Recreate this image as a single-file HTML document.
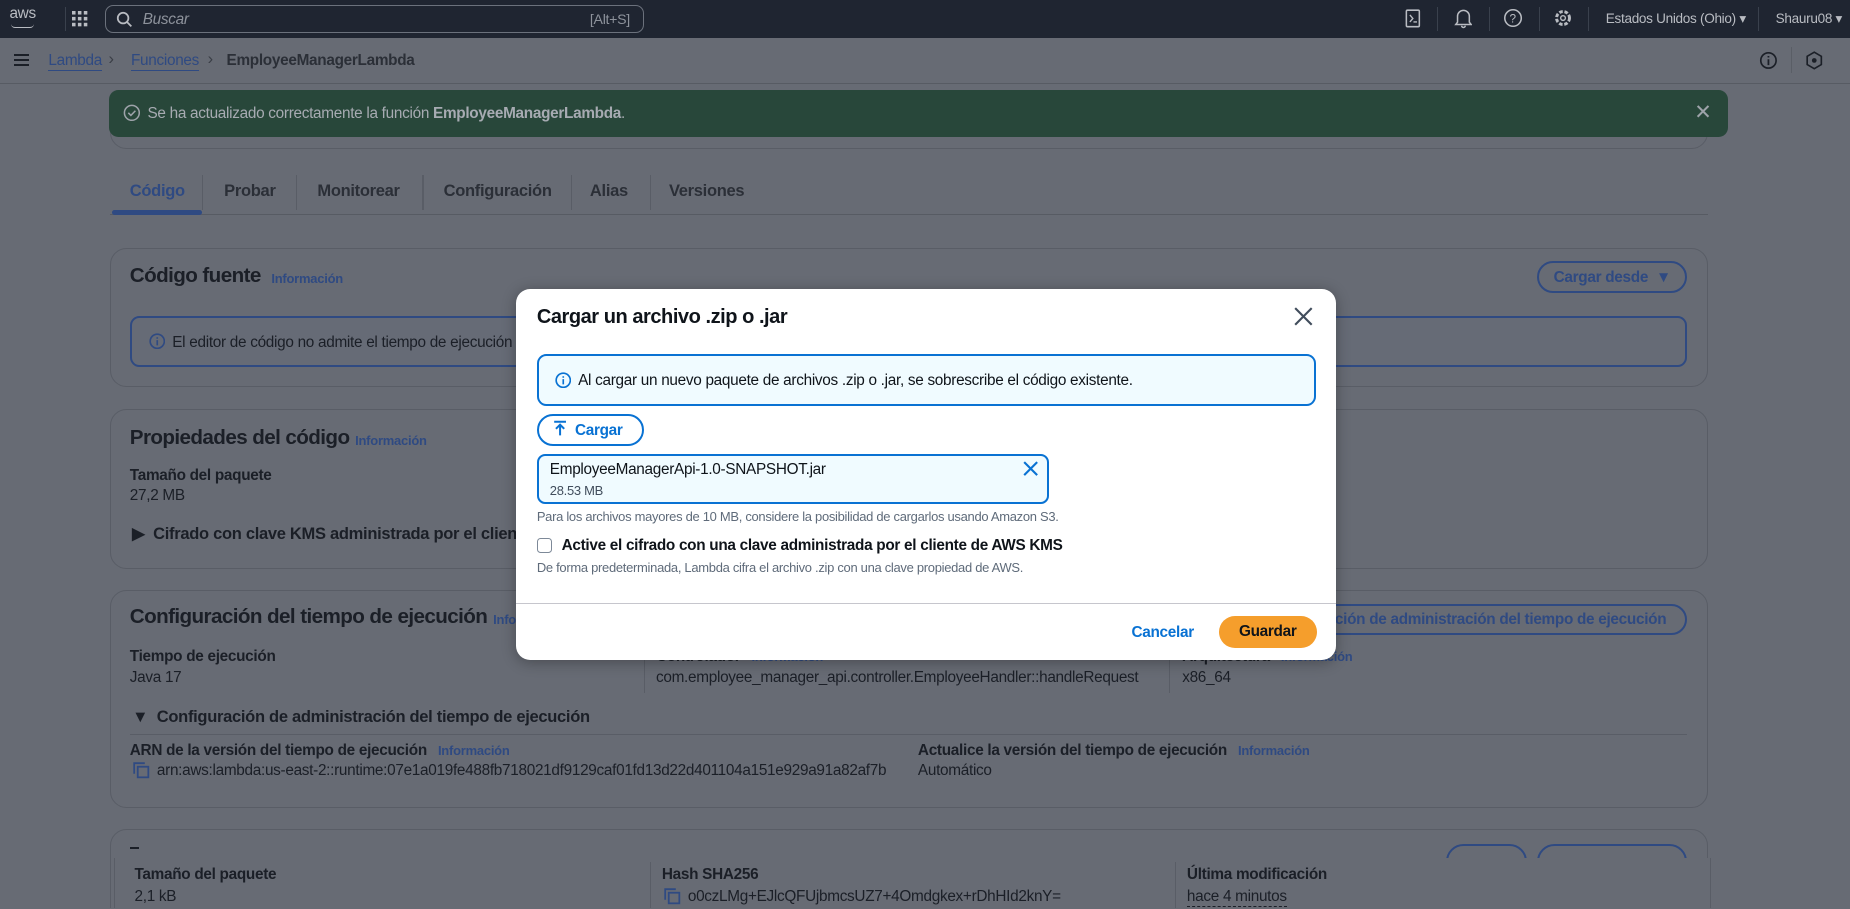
<!DOCTYPE html>
<html><head><meta charset="utf-8"><style>
*{box-sizing:border-box;margin:0;padding:0}
html,body{width:1850px;height:909px;overflow:hidden;background:#676b74}
#z{zoom:1.17985;width:1568px;height:770px;position:relative;font-family:"Liberation Sans",sans-serif;color:#1b1f27;font-size:13px;letter-spacing:-0.25px;background:#676b74;overflow:hidden}
.a{position:absolute;white-space:nowrap}
.top{left:0;top:0;width:1568px;height:32px;background:#1f2531}
.crumb{left:0;top:32px;width:1568px;height:39px;border-bottom:1px solid #575b63}
.card{position:absolute;border:1px solid #595d66;border-radius:14px}
.h2{font-size:17.5px;font-weight:bold;letter-spacing:-0.5px}
.info{font-size:11px;font-weight:bold;color:#2f4a82;letter-spacing:-0.2px}
.lbl{font-weight:bold;font-size:13px}
.lnk{color:#2f4a82}
.btn{position:absolute;border:2px solid #2f4a82;border-radius:16px;color:#2f4a82;font-weight:bold;font-size:13px;text-align:center}
.modal{left:437px;top:245px;width:695px;height:314px;background:#fff;border-radius:12px;box-shadow:0 2px 12px rgba(0,0,0,.3)}
.m{color:#0f141a}
.blue{color:#0972d3}
</style></head><body><div id="z">
<div class="a top"></div>
<div class="a" style="left:8px;top:4px;color:#b9bcc2;font-size:13px;">aws</div>
<div class="a" style="left:9px;top:20px;width:20px;height:4px;border-bottom:1.5px solid #b9bcc2;border-radius:0 0 10px 10px"></div>
<div class="a" style="left:55px;top:6px;width:1px;height:20px;background:#3a414d"></div>
<svg class="a" style="left:61px;top:9px" width="14" height="14"><g fill="#b9bcc2"><rect x="0" y="0" width="3" height="3"/><rect x="5" y="0" width="3" height="3"/><rect x="10" y="0" width="3" height="3"/><rect x="0" y="5" width="3" height="3"/><rect x="5" y="5" width="3" height="3"/><rect x="10" y="5" width="3" height="3"/><rect x="0" y="10" width="3" height="3"/><rect x="5" y="10" width="3" height="3"/><rect x="10" y="10" width="3" height="3"/></g></svg>
<div class="a" style="left:89px;top:4px;width:457px;height:24px;border:1px solid #6b717c;border-radius:7px"></div>
<svg class="a" style="left:98px;top:9px" width="14" height="14"><circle cx="6" cy="6" r="4.5" stroke="#b9bcc2" stroke-width="1.5" fill="none"/><path d="M9.5 9.5L13 13" stroke="#b9bcc2" stroke-width="1.5"/></svg>
<div class="a" style="left:121px;top:9px;color:#8d929b;font-style:italic;font-size:13px">Buscar</div>
<div class="a" style="left:500px;top:9px;color:#8d929b;font-size:12px">[Alt+S]</div>
<svg class="a" style="left:1190px;top:8px" width="16" height="16"><rect x="2" y="1" width="11" height="14" rx="1" stroke="#b9bcc2" fill="none" stroke-width="1.3"/><path d="M5 5l2.5 3L5 11M8 11h3" stroke="#b9bcc2" fill="none" stroke-width="1.2"/></svg>
<div class="a" style="left:1218px;top:6px;width:1px;height:20px;background:#3a414d"></div>
<svg class="a" style="left:1232px;top:7px" width="16" height="18"><path d="M3 12V7a5 5 0 0110 0v5l1.5 2h-13zM6.5 15a1.5 1.5 0 003 0" stroke="#b9bcc2" fill="none" stroke-width="1.3"/></svg>
<div class="a" style="left:1262px;top:6px;width:1px;height:20px;background:#3a414d"></div>
<svg class="a" style="left:1274px;top:7px" width="17" height="17"><circle cx="8.5" cy="8.5" r="7" stroke="#b9bcc2" fill="none" stroke-width="1.3"/><text x="5.5" y="12.5" font-size="10" fill="#b9bcc2" font-family="Liberation Sans">?</text></svg>
<div class="a" style="left:1304px;top:6px;width:1px;height:20px;background:#3a414d"></div>
<svg class="a" style="left:1316px;top:7px" width="17" height="17"><circle cx="8.5" cy="8.5" r="5.5" stroke="#b9bcc2" fill="none" stroke-width="2.5" stroke-dasharray="3 1.5"/><circle cx="8.5" cy="8.5" r="2" stroke="#b9bcc2" fill="none" stroke-width="1.2"/></svg>
<div class="a" style="left:1346px;top:6px;width:1px;height:20px;background:#3a414d"></div>
<div class="a" style="left:1361px;top:9px;color:#b9bcc2;font-size:11.5px">Estados Unidos (Ohio) ▾</div>
<div class="a" style="left:1490px;top:6px;width:1px;height:20px;background:#3a414d"></div>
<div class="a" style="left:1505px;top:9px;color:#b9bcc2;font-size:11.5px">Shauru08 ▾</div>

<div class="a crumb"></div>
<div class="a" style="left:12px;top:46px;width:13px;height:10px;border-top:2px solid #1b1f27;border-bottom:2px solid #1b1f27"></div>
<div class="a" style="left:12px;top:50px;width:13px;height:2px;background:#1b1f27"></div>
<div class="a lnk" style="left:41px;top:44px;border-bottom:1px solid #2f4a82">Lambda</div>
<div class="a" style="left:92px;top:42px;color:#3a3e46;font-size:14px">›</div>
<div class="a lnk" style="left:111px;top:44px;border-bottom:1px solid #2f4a82">Funciones</div>
<div class="a" style="left:176px;top:42px;color:#3a3e46;font-size:14px">›</div>
<div class="a" style="left:192px;top:44px;font-weight:bold;color:#2b2f37">EmployeeManagerLambda</div>
<svg class="a" style="left:1491px;top:43px" width="16" height="16"><circle cx="8" cy="8" r="6.5" stroke="#1b1f27" fill="none" stroke-width="1.4"/><path d="M8 7v5M8 4.2v1.3" stroke="#1b1f27" stroke-width="1.5"/></svg>
<div class="a" style="left:1518px;top:40px;width:1px;height:22px;background:#5a5e66"></div>
<svg class="a" style="left:1531px;top:43px" width="14" height="16"><path d="M7 1l6 3.5v7L7 15l-6-3.5v-7z" stroke="#1b1f27" fill="none" stroke-width="1.4"/><circle cx="7" cy="8" r="2" fill="#1b1f27"/></svg>

<div class="card" style="left:93px;top:80px;width:1355px;height:46px"></div>
<div class="a" style="left:92px;top:76px;width:1373px;height:40px;background:#28473a;border-radius:8px"></div>
<svg class="a" style="left:104px;top:88px" width="15" height="15"><circle cx="7.5" cy="7.5" r="6.3" stroke="#9ea3aa" fill="none" stroke-width="1.3"/><path d="M4.5 7.5l2.2 2.2 3.8-4" stroke="#9ea3aa" fill="none" stroke-width="1.3"/></svg>
<div class="a" style="left:125px;top:89px;color:#a7abb2">Se ha actualizado correctamente la función <b>EmployeeManagerLambda</b>.</div>
<div class="a" style="left:1436px;top:85px;color:#9ea3aa;font-size:18px">✕</div>

<div class="a" style="left:93px;top:181px;width:1355px;height:1px;background:#575b63"></div>
<div class="a" style="left:95px;top:178px;width:76px;height:4px;background:#2f4a82;border-radius:2px"></div>
<div class="a" style="left:110px;top:154px;font-size:14px;font-weight:bold;color:#2f4a82">Código</div>
<div class="a" style="left:190px;top:154px;font-size:14px;font-weight:bold;color:#2b2f37">Probar</div>
<div class="a" style="left:269px;top:154px;font-size:14px;font-weight:bold;color:#2b2f37">Monitorear</div>
<div class="a" style="left:376px;top:154px;font-size:14px;font-weight:bold;color:#2b2f37">Configuración</div>
<div class="a" style="left:500px;top:154px;font-size:14px;font-weight:bold;color:#2b2f37">Alias</div>
<div class="a" style="left:567px;top:154px;font-size:14px;font-weight:bold;color:#2b2f37">Versiones</div>
<div class="a" style="left:171px;top:148px;width:1px;height:30px;background:#595d66"></div>
<div class="a" style="left:251px;top:148px;width:1px;height:30px;background:#595d66"></div>
<div class="a" style="left:358px;top:148px;width:1px;height:30px;background:#595d66"></div>
<div class="a" style="left:484px;top:148px;width:1px;height:30px;background:#595d66"></div>
<div class="a" style="left:551px;top:148px;width:1px;height:30px;background:#595d66"></div>

<div class="card" style="left:93px;top:210px;width:1355px;height:118px"></div>
<div class="a h2" style="left:110px;top:224px">Código fuente</div>
<div class="a info" style="left:230px;top:230px">Información</div>
<div class="btn" style="left:1303px;top:221px;width:127px;height:27px;padding-top:5px">Cargar desde &nbsp;▼</div>
<div class="a" style="left:110px;top:268px;width:1320px;height:43px;border:2px solid #2f4a82;border-radius:8px;background:#666b76"></div>
<svg class="a" style="left:126px;top:282px" width="14" height="14"><circle cx="7" cy="7" r="6" stroke="#2f4a82" fill="none" stroke-width="1.4"/><path d="M7 6v4.5M7 3.6v1.3" stroke="#2f4a82" stroke-width="1.4"/></svg>
<div class="a" style="left:146px;top:283px">El editor de código no admite el tiempo de ejecución Java 17.</div>

<div class="card" style="left:93px;top:347px;width:1355px;height:135px"></div>
<div class="a h2" style="left:110px;top:361px">Propiedades del código</div>
<div class="a info" style="left:301px;top:367px">Información</div>
<div class="a lbl" style="left:110px;top:396px">Tamaño del paquete</div>
<div class="a" style="left:110px;top:413px">27,2 MB</div>
<div class="a" style="left:112px;top:444px;font-size:14px;font-weight:bold">▶ &nbsp;Cifrado con clave KMS administrada por el cliente</div>

<div class="card" style="left:93px;top:500px;width:1355px;height:185px"></div>
<div class="a h2" style="left:110px;top:513px">Configuración del tiempo de ejecución</div>
<div class="a info" style="left:418px;top:519px">Información</div>
<div class="btn" style="left:1000px;top:512px;width:430px;height:26px;padding-top:4px;text-align:right;padding-right:16px">Editar configuración de administración del tiempo de ejecución</div>
<div class="a lbl" style="left:110px;top:549px">Tiempo de ejecución</div>
<div class="a" style="left:110px;top:567px">Java 17</div>
<div class="a" style="left:546px;top:545px;width:1px;height:42px;background:#595d66"></div>
<div class="a lbl" style="left:556px;top:549px">Controlador <span class="info" style="margin-left:6px">Información</span></div>
<div class="a" style="left:556px;top:567px">com.employee_manager_api.controller.EmployeeHandler::handleRequest</div>
<div class="a" style="left:991px;top:545px;width:1px;height:42px;background:#595d66"></div>
<div class="a lbl" style="left:1002px;top:549px">Arquitectura <span class="info" style="margin-left:6px">Información</span></div>
<div class="a" style="left:1002px;top:567px">x86_64</div>
<div class="a" style="left:112px;top:600px;font-size:14px;font-weight:bold">▼ &nbsp;Configuración de administración del tiempo de ejecución</div>
<div class="a" style="left:110px;top:622px;width:1320px;height:1px;background:#595d66"></div>
<div class="a lbl" style="left:110px;top:629px">ARN de la versión del tiempo de ejecución <span class="info" style="margin-left:6px">Información</span></div>
<svg class="a" style="left:113px;top:646px" width="14" height="14"><path d="M1 10V1h9" stroke="#2f4a82" fill="none" stroke-width="1.5"/><rect x="4" y="4" width="9" height="9" stroke="#2f4a82" fill="none" stroke-width="1.5"/></svg>
<div class="a" style="left:133px;top:646px">arn:aws:lambda:us-east-2::runtime:07e1a019fe488fb718021df9129caf01fd13d22d401104a151e929a91a82af7b</div>
<div class="a lbl" style="left:778px;top:629px">Actualice la versión del tiempo de ejecución <span class="info" style="margin-left:6px">Información</span></div>
<div class="a" style="left:778px;top:646px">Automático</div>

<div class="card" style="left:93px;top:703px;width:1355px;height:90px"></div>
<div class="a" style="left:110px;top:718px;width:8px;height:2px;background:#1b1f27"></div>
<div class="btn" style="left:1226px;top:715px;width:68px;height:30px"></div>
<div class="btn" style="left:1303px;top:715px;width:127px;height:30px"></div>
<div class="a" style="left:97px;top:727px;width:1353px;height:50px;background:#676b74;border-left:1px solid #595d66;border-right:1px solid #595d66"></div>
<div class="a lbl" style="left:114px;top:734px">Tamaño del paquete</div>
<div class="a" style="left:114px;top:753px">2,1 kB</div>
<div class="a" style="left:551px;top:731px;width:1px;height:40px;background:#595d66"></div>
<div class="a lbl" style="left:561px;top:734px">Hash SHA256</div>
<svg class="a" style="left:563px;top:753px" width="14" height="14"><path d="M1 10V1h9" stroke="#2f4a82" fill="none" stroke-width="1.5"/><rect x="4" y="4" width="9" height="9" stroke="#2f4a82" fill="none" stroke-width="1.5"/></svg>
<div class="a" style="left:583px;top:753px">o0czLMg+EJlcQFUjbmcsUZ7+4Omdgkex+rDhHId2knY=</div>
<div class="a" style="left:996px;top:731px;width:1px;height:40px;background:#595d66"></div>
<div class="a lbl" style="left:1006px;top:734px">Última modificación</div>
<div class="a" style="left:1006px;top:753px;border-bottom:1px dashed #1b1f27">hace 4 minutos</div>

<div class="a modal"></div>
<div class="a m" style="left:455px;top:259px;font-size:17px;font-weight:bold;letter-spacing:-0.4px">Cargar un archivo .zip o .jar</div>
<svg class="a" style="left:1097px;top:260px" width="16" height="16"><path d="M1 1l14 14M15 1L1 15" stroke="#414d5c" stroke-width="1.8"/></svg>
<div class="a" style="left:455px;top:300px;width:660px;height:44px;border:2px solid #0972d3;border-radius:8px;background:#f0fbff"></div>
<svg class="a" style="left:470px;top:315px" width="14" height="14"><circle cx="7" cy="7" r="6" stroke="#0972d3" fill="none" stroke-width="1.4"/><path d="M7 6v4.5M7 3.6v1.3" stroke="#0972d3" stroke-width="1.4"/></svg>
<div class="a m" style="left:490px;top:315px">Al cargar un nuevo paquete de archivos .zip o .jar, se sobrescribe el código existente.</div>
<div class="btn blue" style="left:455px;top:351px;width:91px;height:27px;border-color:#0972d3;padding-top:5px;padding-left:14px">Cargar</div>
<svg class="a" style="left:469px;top:356px" width="12" height="14"><path d="M1 1.5h10M6 13V4M2.5 7.5L6 4l3.5 3.5" stroke="#0972d3" fill="none" stroke-width="1.7"/></svg>
<div class="a" style="left:455px;top:385px;width:434px;height:42px;border:2px solid #0972d3;border-radius:7px;background:#f0fbff"></div>
<div class="a m" style="left:466px;top:391px">EmployeeManagerApi-1.0-SNAPSHOT.jar</div>
<div class="a" style="left:466px;top:409px;font-size:11px;color:#414d5c">28.53 MB</div>
<svg class="a" style="left:867px;top:391px" width="13" height="13"><path d="M1 1l11 11M12 1L1 12" stroke="#0972d3" stroke-width="1.8"/></svg>
<div class="a" style="left:455px;top:431px;font-size:11px;color:#5f6b7a">Para los archivos mayores de 10 MB, considere la posibilidad de cargarlos usando Amazon S3.</div>
<div class="a" style="left:455px;top:456px;width:13px;height:13px;border:1.5px solid #7d8998;border-radius:3px"></div>
<div class="a m" style="left:476px;top:455px;font-weight:bold">Active el cifrado con una clave administrada por el cliente de AWS KMS</div>
<div class="a" style="left:455px;top:475px;font-size:11px;color:#5f6b7a">De forma predeterminada, Lambda cifra el archivo .zip con una clave propiedad de AWS.</div>
<div class="a" style="left:437px;top:511px;width:695px;height:1px;background:#c6c6cd"></div>
<div class="a blue" style="left:959px;top:529px;font-weight:bold">Cancelar</div>
<div class="a" style="left:1033px;top:522px;width:83px;height:27px;border-radius:14px;background:#f59e2c;font-weight:bold;color:#0f141a;text-align:center;padding-top:6px">Guardar</div>
</div></body></html>
